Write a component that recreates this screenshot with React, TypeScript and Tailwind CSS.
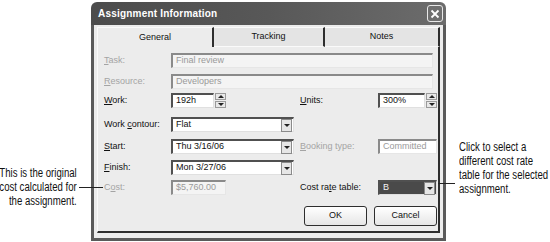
const sunken =
    "h-[15px] flex items-center border-t-2 border-l-2 border-[#505050] border-b border-r border-b-[#e0e0e0] border-r-[#e0e0e0] bg-white pl-[3px] text-[#111]";
const sunkenOff =
    "h-[15px] flex items-center border-t-2 border-l-2 border-[#8a8a8a] border-b border-r border-b-[#e6e6e6] border-r-[#e6e6e6] bg-[#f4f4f4] pl-[3px] text-[#9a9a9a]";

const Arrow = ({ up }: { up?: boolean }) =>
    up ? (
        <div className="w-0 h-0 border-x-[3px] border-x-transparent border-b-[3px] border-b-[#222]" />
    ) : (
        <div className="w-0 h-0 border-x-[3px] border-x-transparent border-t-[3px] border-t-[#222]" />
    );

const Spinner = () => (
    <div className="flex flex-col w-[11px] h-[15px] ml-[1px] gap-[1px]">
        <div className="flex-1 flex items-center justify-center bg-[#e8e8e8] border border-[#9a9a9a]">
            <Arrow up />
        </div>
        <div className="flex-1 flex items-center justify-center bg-[#e8e8e8] border border-[#9a9a9a]">
            <Arrow />
        </div>
    </div>
);

const DropBtn = () => (
    <div className="w-[11px] h-[13px] my-auto mr-[1px] flex items-center justify-center bg-[#e6e6e6] border border-[#8a8a8a]">
        <Arrow />
    </div>
);

const Select = ({ value, width }: { value: string; width: string }) => (
    <div className={`${sunken} ${width} pr-0 justify-between`}>
        <span>{value}</span>
        <DropBtn />
    </div>
);

const Label = ({ text, u, off }: { text: string; u: number; off?: boolean }) => (
    <span className={off ? "text-[#a4a4a4]" : "text-[#111]"}>
        {text.slice(0, u)}
        <span className="underline">{text[u]}</span>
        {text.slice(u + 1)}
    </span>
);

const Tab = ({ name, active, width }: { name: string; active?: boolean; width: string }) => (
    <div
        className={`${width} h-[20px] flex items-center justify-center border-t border-t-[#fafafa] border-r-2 border-r-[#2e2e2e] ${
            active ? "bg-[#ececec] border-l border-l-[#fafafa]" : "bg-[#e4e4e4] border-b border-b-[#fafafa]"
        }`}
    >
        {name}
    </div>
);

const Row = ({ children, mt }: { children: React.ReactNode; mt: string }) => (
    <div className={`grid grid-cols-[67px_129px_78px_59px] items-center ${mt}`}>{children}</div>
);

export default function App() {
    return (
        <div className="relative w-[550px] h-[242px] bg-white flex overflow-hidden">
            {/* left callout */}
            <div className="w-[91px] pt-[166px] pr-[14px] flex flex-col items-end text-[12px] leading-[14px] text-[#111] font-['Liberation_Sans',Arial,sans-serif]">
                <div className="whitespace-nowrap text-right scale-x-[0.8] origin-right">
                    This is the original
                    <br />
                    cost calculated for
                    <br />
                    the assignment.
                </div>
            </div>

            {/* dialog */}
            <div className="w-[355px] mt-[2px] h-[239px] flex flex-col font-['Liberation_Sans',Arial,sans-serif] text-[9px]">
                <div className="h-[23px] rounded-t-[6px] bg-gradient-to-r from-[#4c4c4c] via-[#585858] to-[#6c6c6c] flex items-center justify-between pl-[7px] pr-[3px]">
                    <span className="text-white font-bold text-[10px] tracking-[0.2px]">Assignment Information</span>
                    <div className="w-[16px] h-[17px] rounded-[3px] border border-[#e8e8e8] bg-[#6f6f6f] flex items-center justify-center">
                        <svg width="10" height="10" viewBox="0 0 10 10">
                            <path d="M1.5 1.5L8.5 8.5M8.5 1.5L1.5 8.5" stroke="#fff" strokeWidth="1.8" />
                        </svg>
                    </div>
                </div>

                <div className="flex-1 bg-[#ececec] border-x-[3px] border-b-[3px] border-[#5a5a5a] px-[3px] pt-[2px] pb-[5px] flex flex-col">
                    <div className="flex text-[#111]">
                        <Tab name="General" active width="w-[117px]" />
                        <Tab name="Tracking" width="w-[111px]" />
                        <Tab name="Notes" width="w-[115px]" />
                    </div>

                    <div className="flex-1 w-[343px] border-l border-l-[#fafafa] border-r-2 border-r-[#2e2e2e] border-b-2 border-b-[#2e2e2e] pl-[6px] flex flex-col">
                        <Row mt="mt-[6px]">
                            <Label text="Task:" u={0} off />
                            <div className={`${sunkenOff} col-span-3 w-[262px]`}>Final review</div>
                        </Row>
                        <Row mt="mt-[6px]">
                            <Label text="Resource:" u={0} off />
                            <div className={`${sunkenOff} col-span-3 w-[262px]`}>Developers</div>
                        </Row>
                        <Row mt="mt-[4px]">
                            <Label text="Work:" u={0} />
                            <div className="flex">
                                <div className={`${sunken} w-[43px]`}>192h</div>
                                <Spinner />
                            </div>
                            <Label text="Units:" u={0} />
                            <div className="flex">
                                <div className={`${sunken} w-[47px]`}>300%</div>
                                <Spinner />
                            </div>
                        </Row>
                        <Row mt="mt-[9px]">
                            <Label text="Work contour:" u={5} />
                            <Select value="Flat" width="w-[123px]" />
                        </Row>
                        <Row mt="mt-[7px]">
                            <Label text="Start:" u={0} />
                            <Select value="Thu 3/16/06" width="w-[123px]" />
                            <Label text="Booking type:" u={0} off />
                            <div className={`${sunkenOff} w-[59px] bg-white text-[#8a8a8a]`}>Committed</div>
                        </Row>
                        <Row mt="mt-[6px]">
                            <Label text="Finish:" u={0} />
                            <Select value="Mon 3/27/06" width="w-[123px]" />
                        </Row>
                        <Row mt="mt-[5px]">
                            <Label text="Cost:" u={1} off />
                            <div className={`${sunkenOff} w-[55px]`}>$5,760.00</div>
                            <Label text="Cost rate table:" u={7} />
                            <div className="h-[15px] w-[59px] flex items-center justify-between border-t-2 border-l-2 border-[#505050] border-b border-r border-b-[#e0e0e0] border-r-[#e0e0e0] bg-[#4a4a4a] pl-[3px]">
                                <span className="text-[#f2f2f2]">B</span>
                                <DropBtn />
                            </div>
                        </Row>
                        <div className="flex justify-end gap-[7px] pr-[1px] mt-[11px]">
                            <div className="w-[63px] h-[20px] rounded-[3px] border border-[#2e2e2e] bg-gradient-to-b from-white to-[#e6e6e6] flex items-center justify-center text-[#111]">
                                OK
                            </div>
                            <div className="w-[63px] h-[20px] rounded-[3px] border border-[#2e2e2e] bg-gradient-to-b from-white to-[#e6e6e6] flex items-center justify-center text-[#111]">
                                Cancel
                            </div>
                        </div>
                    </div>
                </div>
            </div>

            {/* right callout */}
            <div className="flex-1 pl-[13px] pt-[140px] text-[12px] leading-[14px] text-[#111] font-['Liberation_Sans',Arial,sans-serif]">
                <div className="whitespace-nowrap scale-x-[0.8] origin-left">
                    Click to select a
                    <br />
                    different cost rate
                    <br />
                    table for the selected
                    <br />
                    assignment.
                </div>
            </div>

            {/* leader lines */}
            <div className="absolute left-[79px] top-[187px] w-[24px] h-px bg-[#222]" />
            <div className="absolute left-[438px] top-[183px] w-[17px] h-px bg-[#222]" />
        </div>
    );
}
